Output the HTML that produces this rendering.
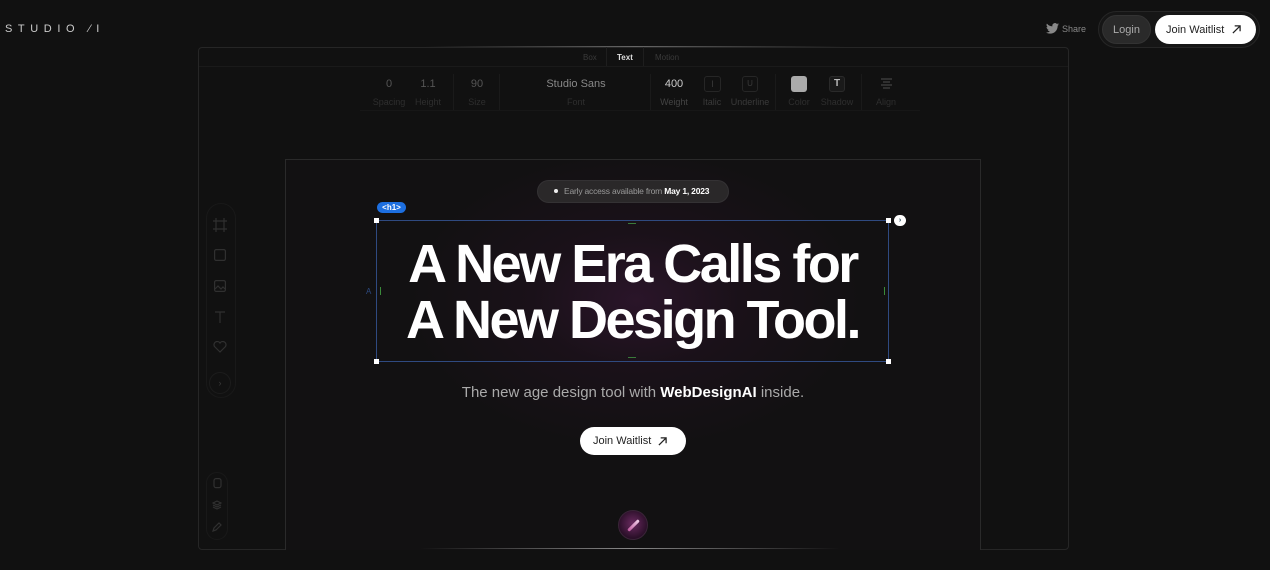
<!DOCTYPE html>
<html><head><meta charset="utf-8"><style>
*{margin:0;padding:0;box-sizing:border-box}
body{width:1270px;height:570px;background:#111111;overflow:hidden;position:relative;font-family:"Liberation Sans",sans-serif;color:#fff}
.a{position:absolute}
.lbl{position:absolute;font-size:9px;color:#2e2e2e;text-align:center;transform:translateX(-50%);white-space:nowrap}
.val{position:absolute;font-size:11px;color:#555;transform:translateX(-50%);white-space:nowrap}
.sep{position:absolute;top:74px;width:1px;height:36px;background:#1a1a1a}
.ic{position:absolute;stroke:#303030;fill:none;stroke-width:1.2}
</style></head><body>
<div class="a" style="left:5px;top:23px;font-size:11px;letter-spacing:5.6px;color:#ccc">STUDIO ⁄I</div>

<svg class="a" style="left:1046px;top:23px" width="13" height="11" viewBox="0 0 24 20"><path fill="#888" d="M24 2.4a10 10 0 0 1-2.8.8A5 5 0 0 0 23.3.4a10 10 0 0 1-3.1 1.2A4.9 4.9 0 0 0 11.8 6 14 14 0 0 1 1.7.9a4.9 4.9 0 0 0 1.5 6.6A4.9 4.9 0 0 1 1 6.9a4.9 4.9 0 0 0 4 4.8 5 5 0 0 1-2.2.1 4.9 4.9 0 0 0 4.6 3.4A9.9 9.9 0 0 1 0 17.3 14 14 0 0 0 7.5 19.5c9 0 14-7.5 14-14v-.6A10 10 0 0 0 24 2.4z"/></svg>
<div class="a" style="left:1062px;top:24px;font-size:9px;color:#888">Share</div>
<div class="a" style="left:1098px;top:11px;width:162px;height:37px;border-radius:19px;background:#161616;border:1px solid #262626"></div>
<div class="a" style="left:1102px;top:15px;width:49px;height:29px;border-radius:15px;background:#2a2a2a;border:1px solid #333;font-size:11px;color:#aaa;text-align:center;line-height:29px">Login</div>
<div class="a" style="left:1155px;top:15px;width:101px;height:29px;border-radius:15px;background:#fff;color:#222;font-size:11px;line-height:30px;padding-left:11px">Join Waitlist<svg style="position:absolute;left:77px;top:10px" width="9" height="9" viewBox="0 0 10 10"><path d="M1 9L9 1M3 1h6v6" stroke="#222" stroke-width="1.4" fill="none"/></svg></div>

<div class="a" style="left:198px;top:47px;width:871px;height:503px;border:1px solid #262626;border-radius:4px;background:#111"></div>
<div class="a" style="left:199px;top:66px;width:869px;height:1px;background:#1a1a1a"></div>
<div class="a" style="left:360px;top:110px;width:560px;height:1px;background:#171717"></div>
<div class="a" style="left:425px;top:46px;width:420px;height:1px;background:linear-gradient(90deg,transparent,#666,transparent)"></div>
<div class="a" style="left:583px;top:53px;font-size:8px;color:#3a3a3a">Box</div>
<div class="a" style="left:617px;top:53px;font-size:8px;color:#ddd;font-weight:bold">Text</div>
<div class="a" style="left:655px;top:53px;font-size:8px;color:#3a3a3a">Motion</div>
<div class="a" style="left:606px;top:47px;width:1px;height:19px;background:#1e1e1e"></div>
<div class="a" style="left:643px;top:47px;width:1px;height:19px;background:#1e1e1e"></div>

<div class="val" style="left:389px;top:78px">0</div><div class="lbl" style="left:389px;top:97px">Spacing</div>
<div class="val" style="left:428px;top:78px">1.1</div><div class="lbl" style="left:428px;top:97px">Height</div>
<div class="sep" style="left:453px"></div>
<div class="val" style="left:477px;top:78px">90</div><div class="lbl" style="left:477px;top:97px">Size</div>
<div class="sep" style="left:499px"></div>
<div class="val" style="left:576px;top:78px;color:#888">Studio Sans</div><div class="lbl" style="left:576px;top:97px">Font</div>
<div class="sep" style="left:650px"></div>
<div class="val" style="left:674px;top:78px;color:#ccc">400</div><div class="lbl" style="left:674px;top:97px;color:#444">Weight</div>
<div class="a" style="left:704px;top:76px;width:17px;height:16px;border:1px solid #262626;border-radius:3px;font-size:9px;color:#3a3a3a;text-align:center;line-height:14px">I</div><div class="lbl" style="left:712px;top:97px;color:#3a3a3a">Italic</div>
<div class="a" style="left:742px;top:76px;width:16px;height:16px;border:1px solid #262626;border-radius:3px;font-size:8px;color:#3a3a3a;text-align:center;line-height:14px">U</div><div class="lbl" style="left:750px;top:97px;color:#3a3a3a">Underline</div>
<div class="sep" style="left:775px"></div>
<div class="a" style="left:791px;top:76px;width:16px;height:16px;background:#aaa;border-radius:3px"></div><div class="lbl" style="left:799px;top:97px">Color</div>
<div class="a" style="left:829px;top:76px;width:16px;height:16px;border:1px solid #2a2a2a;border-radius:3px;background:#1a1a1a;font-size:10px;font-weight:bold;color:#bbb;text-align:center;line-height:14px">T</div><div class="lbl" style="left:837px;top:97px">Shadow</div>
<div class="sep" style="left:861px"></div>
<svg class="a" style="left:880px;top:78px" width="13" height="11"><path d="M1 1h11M3 4h7M1 7h11M3 10h7" stroke="#444" stroke-width="1.2"/></svg><div class="lbl" style="left:886px;top:97px">Align</div>

<div class="a" style="left:285px;top:159px;width:696px;height:391px;border:1px solid #2a2a2a;border-bottom:none;background:radial-gradient(ellipse 230px 150px at 350px 140px,#2a1529 0%,#1a1119 45%,#121112 100%)"></div>
<div class="a" style="left:420px;top:548px;width:420px;height:1px;background:linear-gradient(90deg,transparent,#888,transparent)"></div>

<div class="a" style="left:206px;top:203px;width:30px;height:195px;border:1px solid #191919;border-radius:15px"></div>
<svg class="ic" style="left:213px;top:218px" width="14" height="14"><path d="M3 0v14M11 0v14M0 3h14M0 11h14"/></svg>
<svg class="ic" style="left:214px;top:249px" width="12" height="12"><rect x=".6" y=".6" width="10.8" height="10.8" rx="1.5"/></svg>
<svg class="ic" style="left:214px;top:280px" width="12" height="12"><rect x=".6" y=".6" width="10.8" height="10.8" rx="1.5"/><path d="M1 9l3-3 3 3 2-2 2 2"/></svg>
<svg class="ic" style="left:214px;top:311px" width="12" height="12"><path d="M1 1h10M6 1v11"/></svg>
<svg class="ic" style="left:213px;top:341px" width="14" height="12"><path d="M7 11L1.5 5.5A3 3 0 0 1 7 2a3 3 0 0 1 5.5 3.5z"/></svg>
<div class="a" style="left:209px;top:372px;width:22px;height:22px;border:1px solid #1c1c1c;border-radius:50%;font-size:9px;color:#3a3a3a;text-align:center;line-height:20px">›</div>
<div class="a" style="left:206px;top:472px;width:22px;height:68px;border:1px solid #191919;border-radius:11px"></div>
<svg class="ic" style="left:212px;top:478px" width="10" height="11"><rect x="2" y=".6" width="7" height="9" rx="2"/></svg>
<svg class="ic" style="left:212px;top:500px" width="10" height="10"><path d="M5 1L9 3 5 5 1 3zM1 5l4 2 4-2M1 7l4 2 4-2"/></svg>
<svg class="ic" style="left:212px;top:522px" width="10" height="10"><path d="M1 9l1-3 5-5 2 2-5 5z"/></svg>

<div class="a" style="left:537px;top:180px;width:192px;height:23px;border-radius:12px;background:#2a2829;border:1px solid #343234;font-size:8.5px;color:#999;line-height:21px;padding-left:26px;letter-spacing:-.2px">Early access available from <b style="color:#fff">May 1, 2023</b></div>
<div class="a" style="left:554px;top:189px;width:4px;height:4px;border-radius:50%;background:#eee"></div>

<div class="a" style="left:377px;top:202px;width:29px;height:11px;border-radius:6px;background:#1d6fe0;font-size:8px;font-weight:bold;color:#fff;text-align:center;line-height:11px">&lt;h1&gt;</div>
<div class="a" style="left:376px;top:220px;width:513px;height:142px;border:1px solid #2f4a80"></div>
<div class="a" style="left:374px;top:218px;width:5px;height:5px;background:#fff"></div>
<div class="a" style="left:886px;top:218px;width:5px;height:5px;background:#fff"></div>
<div class="a" style="left:374px;top:359px;width:5px;height:5px;background:#fff"></div>
<div class="a" style="left:886px;top:359px;width:5px;height:5px;background:#fff"></div>
<div class="a" style="left:894px;top:215px;width:12px;height:11px;border-radius:6px;background:#fff;font-size:7px;color:#245;text-align:center;line-height:11px;font-weight:bold">›</div>
<div class="a" style="left:628px;top:223px;width:8px;height:1px;background:#3a7a3a"></div>
<div class="a" style="left:628px;top:357px;width:8px;height:1px;background:#3a7a3a"></div>
<div class="a" style="left:380px;top:287px;width:1px;height:8px;background:#3a8a3a"></div>
<div class="a" style="left:884px;top:287px;width:1px;height:8px;background:#3a8a3a"></div>
<div class="a" style="left:366px;top:287px;font-size:8px;color:#2d4a80">A</div>

<div class="a" style="left:376px;top:236px;width:513px;text-align:center;font-size:54px;font-weight:bold;line-height:56px;letter-spacing:-2.5px;color:#fff">A New Era Calls for<br>A New Design Tool.</div>

<div class="a" style="left:285px;top:384px;width:696px;text-align:center;font-size:15px;color:#aaa">The new age design tool with <b style="color:#fff">WebDesignAI</b> inside.</div>

<div class="a" style="left:580px;top:427px;width:106px;height:28px;border-radius:14px;background:#fff;color:#222;font-size:11px;line-height:29px;padding-left:13px">Join Waitlist<svg style="position:absolute;left:78px;top:10px" width="9" height="9" viewBox="0 0 10 10"><path d="M1 9L9 1M3 1h6v6" stroke="#222" stroke-width="1.4" fill="none"/></svg></div>

<div class="a" style="left:618px;top:510px;width:30px;height:30px;border-radius:50%;background:radial-gradient(circle at 50% 45%,#6a2a60,#2a0f28 70%);border:1px solid #3a2438"></div>
<div class="a" style="left:626px;top:524px;width:15px;height:3px;border-radius:2px;background:linear-gradient(90deg,#c05aa0,#f0d0e8);transform:rotate(-45deg)"></div>
</body></html>
